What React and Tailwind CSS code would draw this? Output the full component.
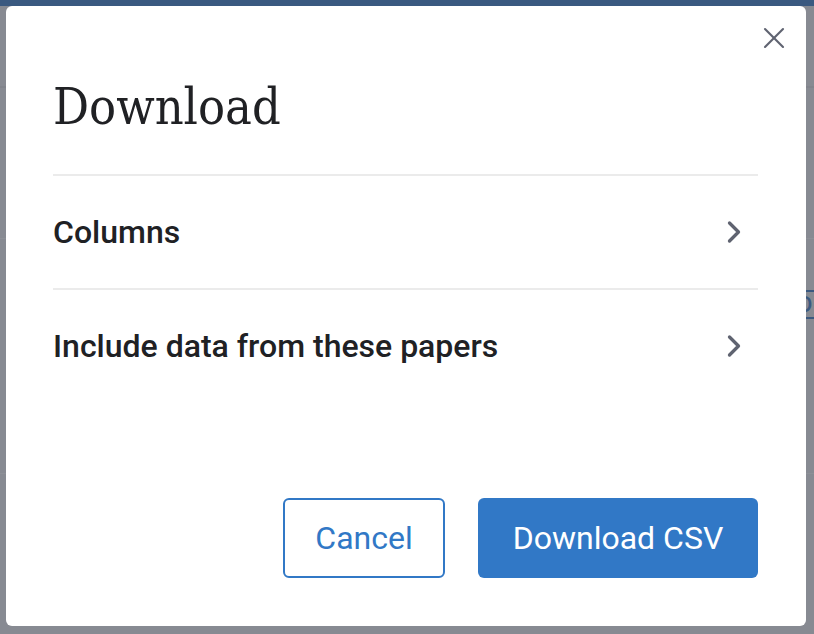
import React from 'react';
import { ChevronRight, X } from 'lucide-react';

const rows = ['Columns', 'Include data from these papers'];

const Backdrop = () => (
    <div className="flex flex-col h-[634px] w-[814px] bg-[#878a92]">
        <div className="h-[6px] bg-[#3a5980]" />
        <div className="h-[80px]" />
        <div className="h-[2px] bg-[#81848c]" />
        <div className="h-[150px]" />
        <div className="h-[1px] bg-[#8d9097]" />
        <div className="h-[51px]" />
        <div className="flex justify-end">
            <div className="w-[36px] h-[29px] -mr-[20px] border-y-2 border-[#3a5980] text-[#3a5980] text-[22px] font-medium leading-[25px] font-['Roboto',sans-serif]">
                D
            </div>
        </div>
        <div className="h-[154px]" />
        <div className="h-[1px] bg-[#8d9097]" />
    </div>
);

const Row = ({ label }) => (
    <div className="flex items-center justify-between h-[114px] border-t-2 border-[#ebebeb]">
        <span className="text-[32px] font-medium text-[#202124]">{label}</span>
        <ChevronRight size={36} strokeWidth={2.2} className="mr-[6px] text-[#5f6370]" />
    </div>
);

export default function App() {
    return (
        <div className="relative w-[814px] h-[634px] overflow-hidden font-['Roboto',sans-serif]">
            <Backdrop />
            {/* modal */}
            <div className="absolute left-[6px] top-[6px] w-[800px] h-[620px] bg-white rounded-[6px] flex flex-col pl-[47px] pr-[48px] pb-[48px]">
                <button className="absolute top-[14px] right-[14px] text-[#5f6370]">
                    <X size={36} strokeWidth={1.4} />
                </button>
                <div className="h-[168px] pt-[72px]">
                    <h2 className="text-[50px] leading-[58px] font-light text-[#202124] font-['DejaVu_Serif_Condensed','DejaVu_Serif',serif]">
                        Download
                    </h2>
                </div>
                {rows.map(r => (
                    <Row key={r} label={r} />
                ))}
                <div className="mt-auto flex justify-end gap-[33px]">
                    <button className="w-[162px] h-[80px] rounded-[6px] border-2 border-[#3178c6] text-[#3178c6] text-[32px] bg-white">
                        Cancel
                    </button>
                    <button className="w-[280px] h-[80px] rounded-[6px] bg-[#3178c6] text-white text-[32px]">
                        Download CSV
                    </button>
                </div>
            </div>
        </div>
    );
}
